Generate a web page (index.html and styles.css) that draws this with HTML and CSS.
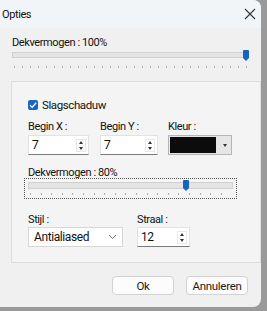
FILE: index.html
```html
<!DOCTYPE html>
<html lang="nl">
  <head>
    <meta charset="UTF-8" />
    <title>Opties</title>
    <link rel="stylesheet" href="styles.css">
  </head>
  <body>
    <div class="dialog">
      <div class="titlebar">
        <span class="title">Opties</span>
        <svg class="close" width="12" height="12" viewBox="0 0 12 12">
          <path d="M1 1L11 11M11 1L1 11" stroke="#333" stroke-width="1.1" fill="none" />
        </svg>
      </div>
      <div class="content">
        <div class="label top-label">Dekvermogen : 100%</div>
        <div class="slider wide">
          <div class="track"></div>
          <div class="thumb" style="left: 231px"></div>
          <div class="ticks"></div>
        </div>

        <div class="group">
          <label class="check">
            <span class="box">
              <svg width="10" height="10" viewBox="0 0 10 10">
                <path d="M2 5.2L4.2 7.3L8.2 2.8" stroke="#fff" stroke-width="1.3" fill="none" />
              </svg>
            </span>
            Slagschaduw
          </label>

          <div class="row">
            <div class="field">
              <div class="label">Begin X :</div>
              <div class="spin w60">
                <span class="val">7</span>
                <span class="arrows"><i class="up"></i><i class="down"></i></span>
              </div>
            </div>
            <div class="field tight">
              <div class="label">Begin Y :</div>
              <div class="spin w58">
                <span class="val">7</span>
                <span class="arrows"><i class="up"></i><i class="down"></i></span>
              </div>
            </div>
            <div class="field">
              <div class="label">Kleur :</div>
              <div class="colour">
                <span class="swatch"></span>
                <i class="down"></i>
              </div>
            </div>
          </div>

          <div class="label mid-label">Dekvermogen : 80%</div>
          <div class="focus">
            <div class="slider narrow">
              <div class="track"></div>
              <div class="thumb" style="left: 155px"></div>
              <div class="ticks"></div>
            </div>
          </div>

          <div class="row bottom-row">
            <div class="field wide-gap">
              <div class="label">Stijl :</div>
              <div class="select">
                <span class="val">Antialiased</span>
                <svg width="9" height="6" viewBox="0 0 9 6">
                  <path d="M1 1L4.5 4.5L8 1" stroke="#777" stroke-width="1" fill="none" />
                </svg>
              </div>
            </div>
            <div class="field">
              <div class="label">Straal :</div>
              <div class="spin w53">
                <span class="val">12</span>
                <span class="arrows"><i class="up"></i><i class="down"></i></span>
              </div>
            </div>
          </div>
        </div>
      </div>
      <div class="buttons">
        <button class="button">Ok</button>
        <button class="button">Annuleren</button>
      </div>
    </div>
  </body>
</html>
```

FILE: styles.css
```css
body {
  margin: 0;
  padding: 0;
  background-color: #9a9a9a;
  font-family: Roboto, "Noto Sans", sans-serif;
  font-size: 11px;
  letter-spacing: -0.4px;
  color: #111;
}
.dialog {
  width: 261px;
  height: 307px;
  background-color: #f0f0f0;
  border-radius: 0 8px 8px 0;
  display: flex;
  flex-direction: column;
  overflow: hidden;
}
.titlebar {
  height: 28px;
  background-color: #f2f5f8;
  display: flex;
  align-items: center;
  justify-content: space-between;
  padding: 0 5px 0 2px;
}
.content {
  flex: 1;
  padding: 0 0 0 11px;
}
.label {
  line-height: 12px;
  white-space: nowrap;
}
.top-label {
  margin-top: 9px;
  padding-left: 1px;
}
.slider {
  position: relative;
  height: 20px;
}
.slider.wide {
  width: 237px;
  margin-left: 1px;
}
.track {
  position: absolute;
  left: 0;
  right: 0;
  top: 3px;
  height: 4px;
  background-color: #e4e4e4;
  border: 1px solid #d0d0d0;
}
.thumb {
  position: absolute;
  top: 1px;
  width: 6px;
  height: 8px;
  background-color: #1565c0;
  border-radius: 1px 1px 0 0;
}
.thumb::after {
  content: "";
  position: absolute;
  left: 0;
  top: 8px;
  border-left: 3px solid transparent;
  border-right: 3px solid transparent;
  border-top: 3px solid #1565c0;
}
.ticks {
  position: absolute;
  left: 2px;
  right: 2px;
  top: 17px;
  height: 2px;
  background-image: repeating-linear-gradient(to right, #b0b0b0 0, #b0b0b0 1px, transparent 1px, transparent 8px);
}
.group {
  margin-top: 12px;
  width: 232px;
  height: 180px;
  border: 1px solid #dedede;
  background-color: #f4f4f4;
  padding: 0 0 0 16px;
}
.check {
  display: flex;
  align-items: center;
  gap: 4px;
  margin-top: 17px;
  height: 12px;
  font-size: 11.5px;
}
.box {
  width: 10px;
  height: 10px;
  background-color: #1a66c2;
  border-radius: 2px;
  display: flex;
}
.row {
  display: flex;
  margin-top: 10px;
}
.field {
  display: flex;
  flex-direction: column;
  gap: 2px;
  margin-right: 11px;
}
.field.tight {
  margin-right: 10px;
}
.field.wide-gap {
  margin-right: 14px;
}
.spin {
  height: 20px;
  background-color: #fff;
  border: 1px solid #e2e2e2;
  border-bottom: 1px solid #7a7a7a;
  display: flex;
  align-items: center;
  justify-content: space-between;
  padding: 0 2px 0 3px;
  box-sizing: border-box;
  font-size: 12px;
}
.w60 { width: 61px; }
.w58 { width: 58px; }
.w53 { width: 53px; }
.arrows {
  display: flex;
  flex-direction: column;
  gap: 3px;
  border: 1px solid #e8e8e8;
  padding: 1px 2px;
}
.up {
  display: block;
  border-left: 2px solid transparent;
  border-right: 2px solid transparent;
  border-bottom: 3px solid #333;
}
.down {
  display: block;
  border-left: 2px solid transparent;
  border-right: 2px solid transparent;
  border-top: 3px solid #333;
}
.colour {
  width: 64px;
  height: 20px;
  box-sizing: border-box;
  border: 1px solid #b5b5b5;
  background-color: #e6e6e6;
  display: flex;
  align-items: center;
  padding: 0 4px 0 1px;
  justify-content: space-between;
}
.swatch {
  width: 46px;
  height: 16px;
  background-color: #0c0c0c;
}
.mid-label {
  margin-top: 12px;
}
.focus {
  margin-left: -4px;
  margin-top: -1px;
  width: 205px;
  height: 19px;
  border: 1px dotted #555;
  padding: 0 3px;
}
.slider.narrow {
  height: 19px;
}
.slider.narrow .track {
  top: 3px;
  height: 5px;
}
.slider.narrow .thumb {
  top: 1px;
}
.slider.narrow .ticks {
  top: 14px;
  background-image: repeating-linear-gradient(to right, #b0b0b0 0, #b0b0b0 1px, transparent 1px, transparent 10.6px);
}
.bottom-row {
  margin-top: 15px;
}
.bottom-row .field {
  gap: 1px;
}
.select {
  width: 95px;
  height: 20px;
  box-sizing: border-box;
  background-color: #fff;
  border: 1px solid #d6d6d6;
  display: flex;
  align-items: center;
  justify-content: space-between;
  padding: 0 5px 0 5px;
  font-size: 12px;
}
.buttons {
  display: flex;
  justify-content: flex-end;
  gap: 12px;
  padding: 0 13px 12px 0;
}
.button {
  width: 62px;
  height: 19px;
  background-color: #fcfcfc;
  border: 1px solid #d2d2d2;
  border-radius: 4px;
  font-family: inherit;
  font-size: 11.5px;
  letter-spacing: -0.3px;
  color: #1a1a1a;
  padding: 0;
}
```
